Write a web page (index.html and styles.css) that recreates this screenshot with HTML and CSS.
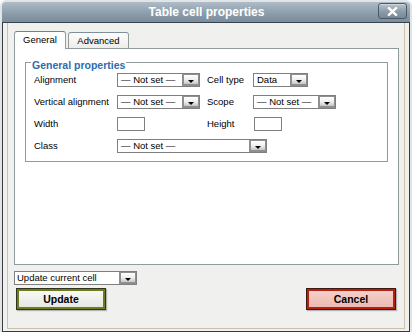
FILE: index.html
```html
<!DOCTYPE html>
<html lang="en">
<head>
    <meta charset="UTF-8" />
    <title>Table cell properties</title>
    <link rel="stylesheet" href="styles.css">
</head>
<body>
    <div class="window">
        <div class="titlebar">
            <span></span>
            <span class="title">Table cell properties</span>
            <span class="close">
                <svg width="11" height="9" viewBox="0 0 11 9">
                    <path d="M2 1.2 L9 7.8 M9 1.2 L2 7.8" stroke="#fff" stroke-width="2.4" stroke-linecap="square"/>
                </svg>
            </span>
        </div>

        <div class="frame">
            <div class="client">
                <div class="tabs">
                    <span class="tab current">General</span>
                    <span class="tab">Advanced</span>
                </div>

                <div class="panel">
                    <div class="fieldset">
                        <span class="legend">General properties</span>
                        <div class="form-grid">
                            <label>Alignment</label>
                            <div class="select w-83"><span class="value">— Not set —</span><i class="arrow"></i></div>
                            <label>Cell type</label>
                            <div class="select w-55"><span class="value">Data</span><i class="arrow"></i></div>

                            <label>Vertical alignment</label>
                            <div class="select w-83"><span class="value">— Not set —</span><i class="arrow"></i></div>
                            <label>Scope</label>
                            <div class="select w-83"><span class="value">— Not set —</span><i class="arrow"></i></div>

                            <label>Width</label>
                            <div><span class="text-input"></span></div>
                            <label>Height</label>
                            <div><span class="text-input shift"></span></div>

                            <label>Class</label>
                            <div class="select w-150 span-3"><span class="value">— Not set —</span><i class="arrow"></i></div>
                        </div>
                    </div>
                </div>

                <div class="select action-select"><span class="value">Update current cell</span><i class="arrow"></i></div>

                <div class="buttons">
                    <button class="btn btn-update">Update</button>
                    <button class="btn btn-cancel">Cancel</button>
                </div>
            </div>
        </div>
    </div>
</body>
</html>
```

FILE: styles.css
```css
* {
    margin: 0;
    padding: 0;
    box-sizing: border-box;
}

body {
    font-family: 'Liberation Sans', Arial, sans-serif;
    font-size: 9.5px;
    color: #000000;
    background: #ffffff;
}

.window {
    width: 412px;
    height: 332px;
    display: flex;
    flex-direction: column;
    background: #f0f0ee;
    border: 2px solid #e2e5e8;
    border-bottom: none;
    border-radius: 6px 6px 0 0;
    overflow: hidden;
}

.titlebar {
    height: 21px;
    display: grid;
    grid-template-columns: 1fr auto 1fr;
    align-items: start;
    background: linear-gradient(#aebcc7, #8c9eac 55%, #7a8d9c);
    border-bottom: 1px solid #36424c;
}

.title {
    color: #ffffff;
    font-weight: 700;
    font-size: 12px;
    line-height: 20px;
    padding-left: 1px;
}

.close {
    justify-self: end;
    width: 29px;
    height: 16px;
    margin: 1px 3px 0 0;
    display: flex;
    align-items: center;
    justify-content: center;
    border: 1px solid #4b5965;
    border-radius: 3px;
    background: linear-gradient(#b8c4cd, #8d9eab 50%, #75889a);
    box-shadow: inset 0 1px 0 rgba(255, 255, 255, 0.35);
}

.frame {
    flex: 1;
    display: flex;
    border: 1px solid #3a3a3a;
    border-top: none;
}

.client {
    flex: 1;
    margin: 0 4px 2px;
    padding: 8px 5px 0 6px;
    border: 1px solid #cdbfae;
    border-top: none;
}

/* tabs */
.tabs {
    display: flex;
    align-items: flex-end;
    gap: 2px;
    margin-bottom: -1px;
    position: relative;
    z-index: 1;
}

.tab {
    height: 16px;
    margin-bottom: 1px;
    border: 1px solid #919b9c;
    border-bottom: none;
    border-top-color: #7f8f9c;
    border-radius: 3px 3px 0 0;
    background: linear-gradient(#fdfdfd, #ecece8);
    line-height: 15px;
    text-align: center;
    width: 61px;
    font-size: 9.5px;
}

.tab.current {
    width: 52px;
    height: 18px;
    margin-bottom: 0;
    background: #ffffff;
    border-top-color: #6d8194;
    line-height: 16px;
}

.panel {
    height: 217px;
    background: #ffffff;
    border: 1px solid #919b9c;
    padding-top: 13px;
}

.fieldset {
    margin: 0 10px;
    height: 100px;
    border: 1px solid #919b9c;
}

.legend {
    display: table;
    margin: -4px 0 0 5px;
    padding: 0 1px;
    background: #ffffff;
    color: #2b6cb3;
    font-weight: 700;
    font-size: 10.5px;
    line-height: 12px;
}

.form-grid {
    margin-top: 2px;
    padding-left: 8px;
    display: grid;
    grid-template-columns: 83px 90px 46px auto;
    grid-auto-rows: 14px;
    row-gap: 8px;
    align-items: center;
}

.form-grid label {
    line-height: 14px;
    white-space: nowrap;
}

/* fake select boxes */
.select {
    height: 14px;
    display: flex;
    background: #ffffff;
    border: 1px solid #7f7f7f;
}

.select .value {
    flex: 1;
    padding-left: 3px;
    line-height: 12px;
    white-space: nowrap;
    overflow: hidden;
}

.arrow {
    width: 17px;
    height: 100%;
    display: flex;
    align-items: flex-end;
    justify-content: center;
    padding-bottom: 1px;
    border: 2px solid #8f8f8f;
    border-top-width: 1px;
    border-right-width: 1px;
    background: linear-gradient(#ffffff, #f0f0f0 50%, #c6c6c6);
}

.arrow::after {
    content: "";
    border-left: 3px solid transparent;
    border-right: 3px solid transparent;
    border-top: 3px solid #000000;
}

.w-83 { width: 83px; }
.w-55 { width: 55px; }
.w-150 { width: 150px; }
.span-3 { grid-column: span 3; }

.text-input {
    display: block;
    width: 28px;
    height: 14px;
    border: 1px solid #7f7f7f;
    background: #ffffff;
}

.text-input.shift {
    margin-left: 1px;
}

.action-select {
    width: 123px;
    margin-top: 6px;
}

.action-select .value {
    padding-left: 2px;
}

/* buttons */
.buttons {
    display: flex;
    justify-content: space-between;
    margin: 3px 3px 0 2px;
}

.btn {
    width: 90px;
    height: 22px;
    font-family: 'Liberation Sans', Arial, sans-serif;
    font-weight: 700;
    font-size: 10.5px;
    color: #000000;
    border: 1px solid #2b2b2b;
    box-shadow: 1px 1px 1px rgba(0, 0, 0, 0.25);
}

.btn-update {
    background: linear-gradient(#fbfbf8, #ededea 60%, #e4e4e0);
    border-color: #2f3320;
    box-shadow: inset 0 0 0 2px #6e7c1e, 1px 1px 1px rgba(0, 0, 0, 0.25);
}

.btn-cancel {
    background: linear-gradient(#f6d3cd, #efc2ba 60%, #ebb8af);
    border-color: #3a1a14;
    box-shadow: inset 0 0 0 2px #b4220f, 1px 1px 1px rgba(0, 0, 0, 0.25);
}
```
